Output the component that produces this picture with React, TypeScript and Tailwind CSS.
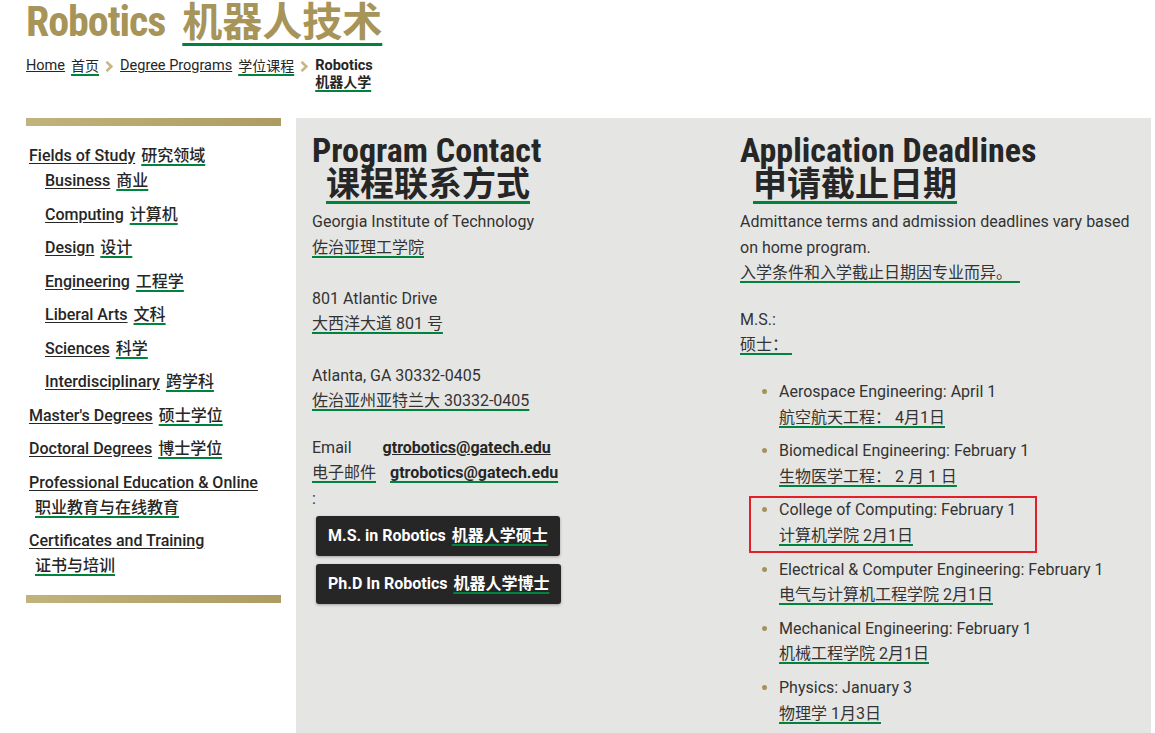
import React from 'react'

const zh = 'underline decoration-[#00843d] decoration-[1.5px] underline-offset-[3px]'

function Chevron() {
    return (
        <svg width="8" height="11" viewBox="0 0 8 11" className="ml-[6px] mr-[7px] mt-[3px] shrink-0">
            <path d="M1.5 0.8 L6.3 5.5 L1.5 10.2" fill="none" stroke="#c6b784" strokeWidth="2.6" />
        </svg>
    )
}

function SideLink({ en, zhText, sub }: { en: string; zhText: string; sub?: boolean }) {
    return (
        <a href="#" className={sub ? 'pl-4' : ''}>
            <span className="underline underline-offset-[2px]">{en}</span>
            <span className={`ml-1.5 ${zh}`}>{zhText}</span>
        </a>
    )
}

const fields: [string, string][] = [
    ['Business', '商业'],
    ['Computing', '计算机'],
    ['Design', '设计'],
    ['Engineering', '工程学'],
    ['Liberal Arts', '文科'],
    ['Sciences', '科学'],
    ['Interdisciplinary', '跨学科'],
]

const deadlines: [string, string][] = [
    ['Aerospace Engineering: April 1', '航空航天工程：\u00a04月1日'],
    ['Biomedical Engineering: February 1', '生物医学工程：\u00a02 月 1 日'],
    ['College of Computing: February 1', '计算机学院 2月1日'],
    ['Electrical & Computer Engineering: February 1', '电气与计算机工程学院 2月1日'],
    ['Mechanical Engineering: February 1', '机械工程学院 2月1日'],
    ['Physics: January 3', '物理学 1月3日'],
]

export default function App() {
    return (
        <div className="min-h-screen bg-white font-[Roboto,'Noto_Sans_CJK_SC',sans-serif] text-[#333]">
            {/* Title + breadcrumb */}
            <header className="px-[26px]">
                <h1 className="text-[42px] leading-[44px] font-bold text-[#a69458] whitespace-nowrap">
                    <span className="font-stretch-condensed tracking-[-0.025em]">Robotics</span>
                    <span className="ml-[17px] text-[40px] underline decoration-[#00843d] decoration-[3px] underline-offset-[7px]">
                        机器人技术
                    </span>
                </h1>
                <nav className="mt-[13px] flex items-start text-[14.5px] leading-[16px] text-[#262626]">
                    <a href="#" className="underline">Home</a>
                    <span className={`ml-1.5 text-[14px] ${zh}`}>首页</span>
                    <Chevron />
                    <a href="#" className="underline">Degree Programs</a>
                    <span className={`ml-1.5 text-[14px] ${zh}`}>学位课程</span>
                    <Chevron />
                    <div className="flex flex-col items-start font-bold">
                        <span>Robotics</span>
                        <span className={`text-[14px] ${zh}`}>机器人学</span>
                    </div>
                </nav>
            </header>

            <div className="mt-[28px] flex pl-[26px] pr-[4px]">
                {/* Sidebar */}
                <aside className="w-[255px] shrink-0">
                    <div className="h-2 bg-gradient-to-r from-[#c1b37c] to-[#ad9b62]" />
                    <ul className="mt-[17px] pl-[3px] flex flex-col gap-[8.5px] text-[16px] leading-[25px] font-medium text-[#262626]">
                        <li className="flex flex-col">
                            <SideLink en="Fields of Study" zhText="研究领域" />
                            <ul className="flex flex-col gap-[8.5px]">
                                {fields.map(([en, z]) => (
                                    <li key={en}>
                                        <SideLink en={en} zhText={z} sub />
                                    </li>
                                ))}
                            </ul>
                        </li>
                        <li><SideLink en="Master's Degrees" zhText="硕士学位" /></li>
                        <li><SideLink en="Doctoral Degrees" zhText="博士学位" /></li>
                        <li className="flex flex-col items-start">
                            <a href="#" className="underline underline-offset-[2px]">Professional Education &amp; Online</a>
                            <span className={`ml-1.5 ${zh}`}>职业教育与在线教育</span>
                        </li>
                        <li className="flex flex-col items-start">
                            <a href="#" className="underline underline-offset-[2px]">Certificates and Training</a>
                            <span className={`ml-1.5 ${zh}`}>证书与培训</span>
                        </li>
                    </ul>
                    <div className="mt-[17px] h-2 bg-gradient-to-r from-[#c1b37c] to-[#ad9b62]" />
                </aside>

                {/* Main panel */}
                <main className="ml-[15px] flex-1 bg-[#e5e6e3] pt-[15px] pl-4 pr-4 pb-4 grid grid-cols-[428px_1fr] text-[16px] leading-[25.6px]">
                    <section>
                        <h2 className="text-[34px] leading-[34px] font-bold text-[#262626]">
                            <span className="block font-stretch-condensed">Program Contact</span>
                            <span className="ml-[14px] inline-block border-b-[3px] border-[#00843d]">课程联系方式</span>
                        </h2>
                        <p className="mt-[5px]">
                            Georgia Institute of Technology<br />
                            <span className={zh}>佐治亚理工学院</span><br />
                            <br />
                            801 Atlantic Drive<br />
                            <span className={zh}>大西洋大道 801 号</span><br />
                            <br />
                            Atlanta, GA 30332-0405<br />
                            <span className={zh}>佐治亚州亚特兰大 30332-0405</span>
                        </p>
                        <p className="mt-[21px]">
                            Email
                            <a href="#" className="ml-[31px] font-bold text-[#262626] underline">gtrobotics@gatech.edu</a><br />
                            <span className={zh}>电子邮件</span>
                            <a href="#" className={`ml-[14px] font-bold text-[#262626] ${zh}`}>gtrobotics@gatech.edu</a><br />
                            :
                        </p>
                        <div className="mt-[4px] ml-1 flex flex-col items-start gap-2">
                            <a href="#" className="h-10 px-3 flex items-center rounded-[3px] bg-[#262626] text-white font-bold shadow-[0_1px_3px_rgba(0,0,0,0.3)]">
                                M.S. in Robotics
                                <span className={`ml-1.5 ${zh}`}>机器人学硕士</span>
                            </a>
                            <a href="#" className="h-10 px-3 flex items-center rounded-[3px] bg-[#262626] text-white font-bold shadow-[0_1px_3px_rgba(0,0,0,0.3)]">
                                Ph.D In Robotics
                                <span className={`ml-1.5 ${zh}`}>机器人学博士</span>
                            </a>
                        </div>
                    </section>

                    <section>
                        <h2 className="text-[34px] leading-[34px] font-bold text-[#262626]">
                            <span className="block font-stretch-condensed">Application Deadlines</span>
                            <span className="ml-[13px] inline-block border-b-[3px] border-[#00843d]">申请截止日期</span>
                        </h2>
                        <p className="mt-[5px]">
                            Admittance terms and admission deadlines vary based on home program.<br />
                            <span className={zh}>入学条件和入学截止日期因专业而异。{'\u00a0\u00a0'}</span>
                        </p>
                        <p className="mt-[21px]">
                            M.S.:<br />
                            <span className={zh}>硕士：{'\u00a0'}</span>
                        </p>
                        <ul className="mt-[21px] pl-[39px] list-disc marker:text-[#a4925a]">
                            {deadlines.map(([en, z], i) => (
                                <li key={en} className="relative mb-[8px]">
                                    {en}<br />
                                    <span className={zh}>{z}</span>
                                    {i === 2 && (
                                        <div className="absolute -left-[30px] -top-[1px] w-[288px] h-[57px] border-2 border-[#e3202a]" />
                                    )}
                                </li>
                            ))}
                        </ul>
                    </section>
                </main>
            </div>
        </div>
    )
}
